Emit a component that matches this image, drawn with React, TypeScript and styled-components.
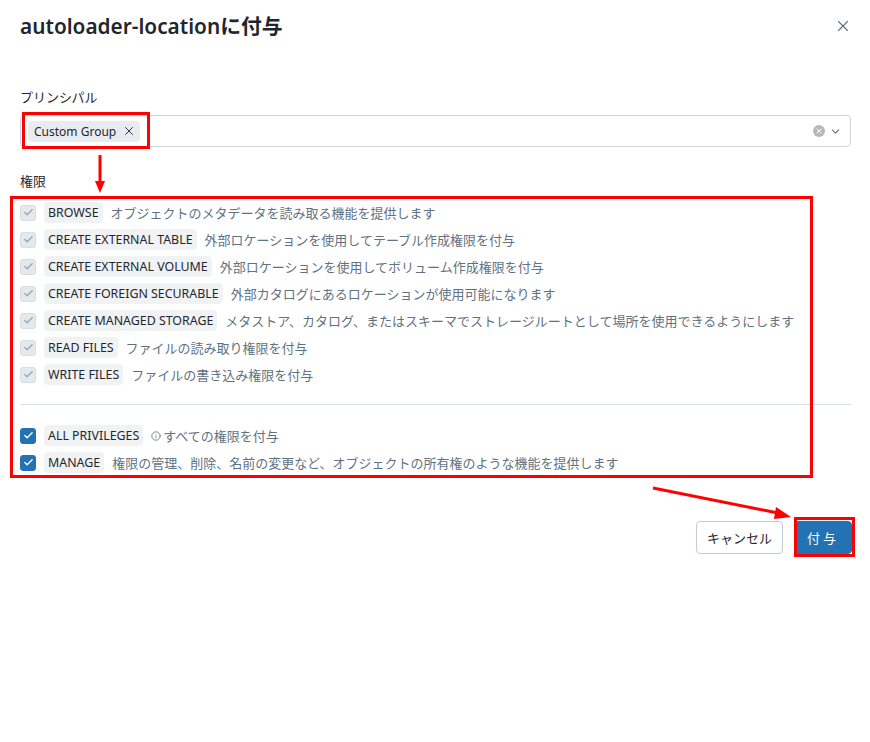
import React from "react";
import styled, { createGlobalStyle } from "styled-components";
import { X, ChevronDown, Check, Info } from "lucide-react";

const GlobalStyle = createGlobalStyle`
  body {
    margin: 0;
    background: #ffffff;
    font-family: "Noto Sans", "Noto Sans CJK JP", sans-serif;
    color: #1f272d;
  }
`;

const Dialog = styled.div`
  position: relative;
  width: 870px;
  height: 742px;
  box-sizing: border-box;
  padding: 10px 19px 0 20px;
  display: flex;
  flex-direction: column;
`;

const Header = styled.div`
  display: flex;
  align-items: center;
  justify-content: space-between;
  height: 32px;
`;

const Title = styled.h1`
  margin: 0;
  font-size: 20.8px;
  font-weight: 600;
  line-height: 28px;
  color: #1f272d;
`;

const CloseButton = styled.span`
  display: flex;
  align-items: center;
  color: #5f7281;
  margin-right: -1px;
`;

const Label = styled.div`
  font-size: 13px;
  line-height: 18px;
  color: #1f272d;
  margin-top: ${(p: { $top: number }) => p.$top}px;
`;

const SelectBox = styled.div`
  margin-top: 9px;
  height: 32px;
  box-sizing: border-box;
  border: 1px solid #cbd5de;
  border-radius: 4px;
  display: flex;
  align-items: center;
  padding: 0 8px 0 7px;
`;

const Chip = styled.span`
  display: inline-flex;
  align-items: center;
  gap: 6px;
  height: 21px;
  padding: 0 4px 0 6px;
  background: #e8ecf0;
  border-radius: 4px;
  font-size: 12px;
  color: #1f272d;
`;

const Spacer = styled.div`
  flex: 1;
`;

const ClearDot = styled.span`
  width: 12px;
  height: 12px;
  border-radius: 50%;
  background: #b8b8b8;
  display: flex;
  align-items: center;
  justify-content: center;
  color: #ffffff;
  margin-right: 4px;
`;

const List = styled.div`
  margin-top: 9px;
  display: flex;
  flex-direction: column;
`;

const Row = styled.div`
  height: 27px;
  display: flex;
  align-items: center;
  gap: 8px;
`;

const Box = styled.span<{ $on: boolean }>`
  width: 16px;
  height: 16px;
  box-sizing: border-box;
  border-radius: 3px;
  display: flex;
  align-items: center;
  justify-content: center;
  background: ${(p) => (p.$on ? "#2272b4" : "#e4e9ee")};
  border: 1px solid ${(p) => (p.$on ? "#2272b4" : "#d6dde3")};
  color: ${(p) => (p.$on ? "#ffffff" : "#9aa7b2")};
`;

const Code = styled.span`
  height: 21px;
  display: inline-flex;
  align-items: center;
  padding: 0 4px;
  background: #f0f2f4;
  border-radius: 4px;
  font-size: 12.4px;
  color: #1f272d;
`;

const Desc = styled.span`
  font-size: 13px;
  color: #5f7281;
  display: inline-flex;
  align-items: center;
  gap: 2px;
`;

const Divider = styled.div`
  height: 1px;
  background: #d8dee4;
  margin: 16px 0 17px;
`;

const Footer = styled.div`
  margin-top: 45px;
  display: flex;
  justify-content: flex-end;
  gap: 11px;
  margin-right: -1px;
`;

const Button = styled.button<{ $primary?: boolean }>`
  height: 33px;
  box-sizing: border-box;
  padding: ${(p) => (p.$primary ? "0 12px" : "0 10px")};
  border-radius: 4px;
  font-family: inherit;
  font-size: 13px;
  cursor: pointer;
  border: 1px solid ${(p) => (p.$primary ? "#2272b4" : "#c0cdd8")};
  background: ${(p) => (p.$primary ? "#2272b4" : "#ffffff")};
  color: ${(p) => (p.$primary ? "#ffffff" : "#1f272d")};
  letter-spacing: ${(p) => (p.$primary ? "3px" : "0")};
`;

const Mark = styled.div<{ $x: number; $y: number; $w: number; $h: number }>`
  position: absolute;
  left: ${(p) => p.$x}px;
  top: ${(p) => p.$y}px;
  width: ${(p) => p.$w}px;
  height: ${(p) => p.$h}px;
  box-sizing: border-box;
  border: 3px solid #ff0000;
  pointer-events: none;
`;

const Arrows = styled.svg`
  position: absolute;
  left: 0;
  top: 0;
  pointer-events: none;
`;

const locked = [
  ["BROWSE", "オブジェクトのメタデータを読み取る機能を提供します"],
  ["CREATE EXTERNAL TABLE", "外部ロケーションを使用してテーブル作成権限を付与"],
  ["CREATE EXTERNAL VOLUME", "外部ロケーションを使用してボリューム作成権限を付与"],
  ["CREATE FOREIGN SECURABLE", "外部カタログにあるロケーションが使用可能になります"],
  ["CREATE MANAGED STORAGE", "メタストア、カタログ、またはスキーマでストレージルートとして場所を使用できるようにします"],
  ["READ FILES", "ファイルの読み取り権限を付与"],
  ["WRITE FILES", "ファイルの書き込み権限を付与"],
];

const Privilege = ({ name, desc, on, info }: { name: string; desc: string; on: boolean; info?: boolean }) => (
  <Row>
    <Box $on={on}>
      <Check size={11} strokeWidth={3} />
    </Box>
    <Code>{name}</Code>
    <Desc>
      {info && <Info size={10} strokeWidth={2} />}
      {desc}
    </Desc>
  </Row>
);

export default function App() {
  return (
    <Dialog>
      <GlobalStyle />
      <Header>
        <Title>autoloader-locationに付与</Title>
        <CloseButton>
          <X size={18} strokeWidth={1.5} />
        </CloseButton>
      </Header>

      <Label $top={46}>プリンシパル</Label>
      <SelectBox>
        <Chip>
          Custom Group
          <X size={14} strokeWidth={1.6} />
        </Chip>
        <Spacer />
        <ClearDot>
          <X size={8} strokeWidth={3} />
        </ClearDot>
        <ChevronDown size={13} color="#5f7281" strokeWidth={2} />
      </SelectBox>

      <Label $top={25}>権限</Label>
      <List>
        {locked.map(([n, d]) => (
          <Privilege key={n} name={n} desc={d} on={false} />
        ))}
        <Divider />
        <Privilege name="ALL PRIVILEGES" desc="すべての権限を付与" on info />
        <Privilege name="MANAGE" desc="権限の管理、削除、名前の変更など、オブジェクトの所有権のような機能を提供します" on />
      </List>

      <Footer>
        <Button>キャンセル</Button>
        <Button $primary>付与</Button>
      </Footer>

      <Mark $x={22} $y={112} $w={128} $h={37} />
      <Mark $x={10} $y={196} $w={803} $h={282} />
      <Mark $x={794} $y={517} $w={61} $h={40} />
      <Arrows width="870" height="742">
        <line x1="100" y1="155" x2="100" y2="182" stroke="#ff0000" strokeWidth="3" />
        <polygon points="95,181 105,181 100,193" fill="#ff0000" />
        <line x1="653" y1="488" x2="778" y2="513" stroke="#ff0000" strokeWidth="3" />
        <polygon points="776,507 774,519 791,517" fill="#ff0000" />
      </Arrows>
    </Dialog>
  );
}
